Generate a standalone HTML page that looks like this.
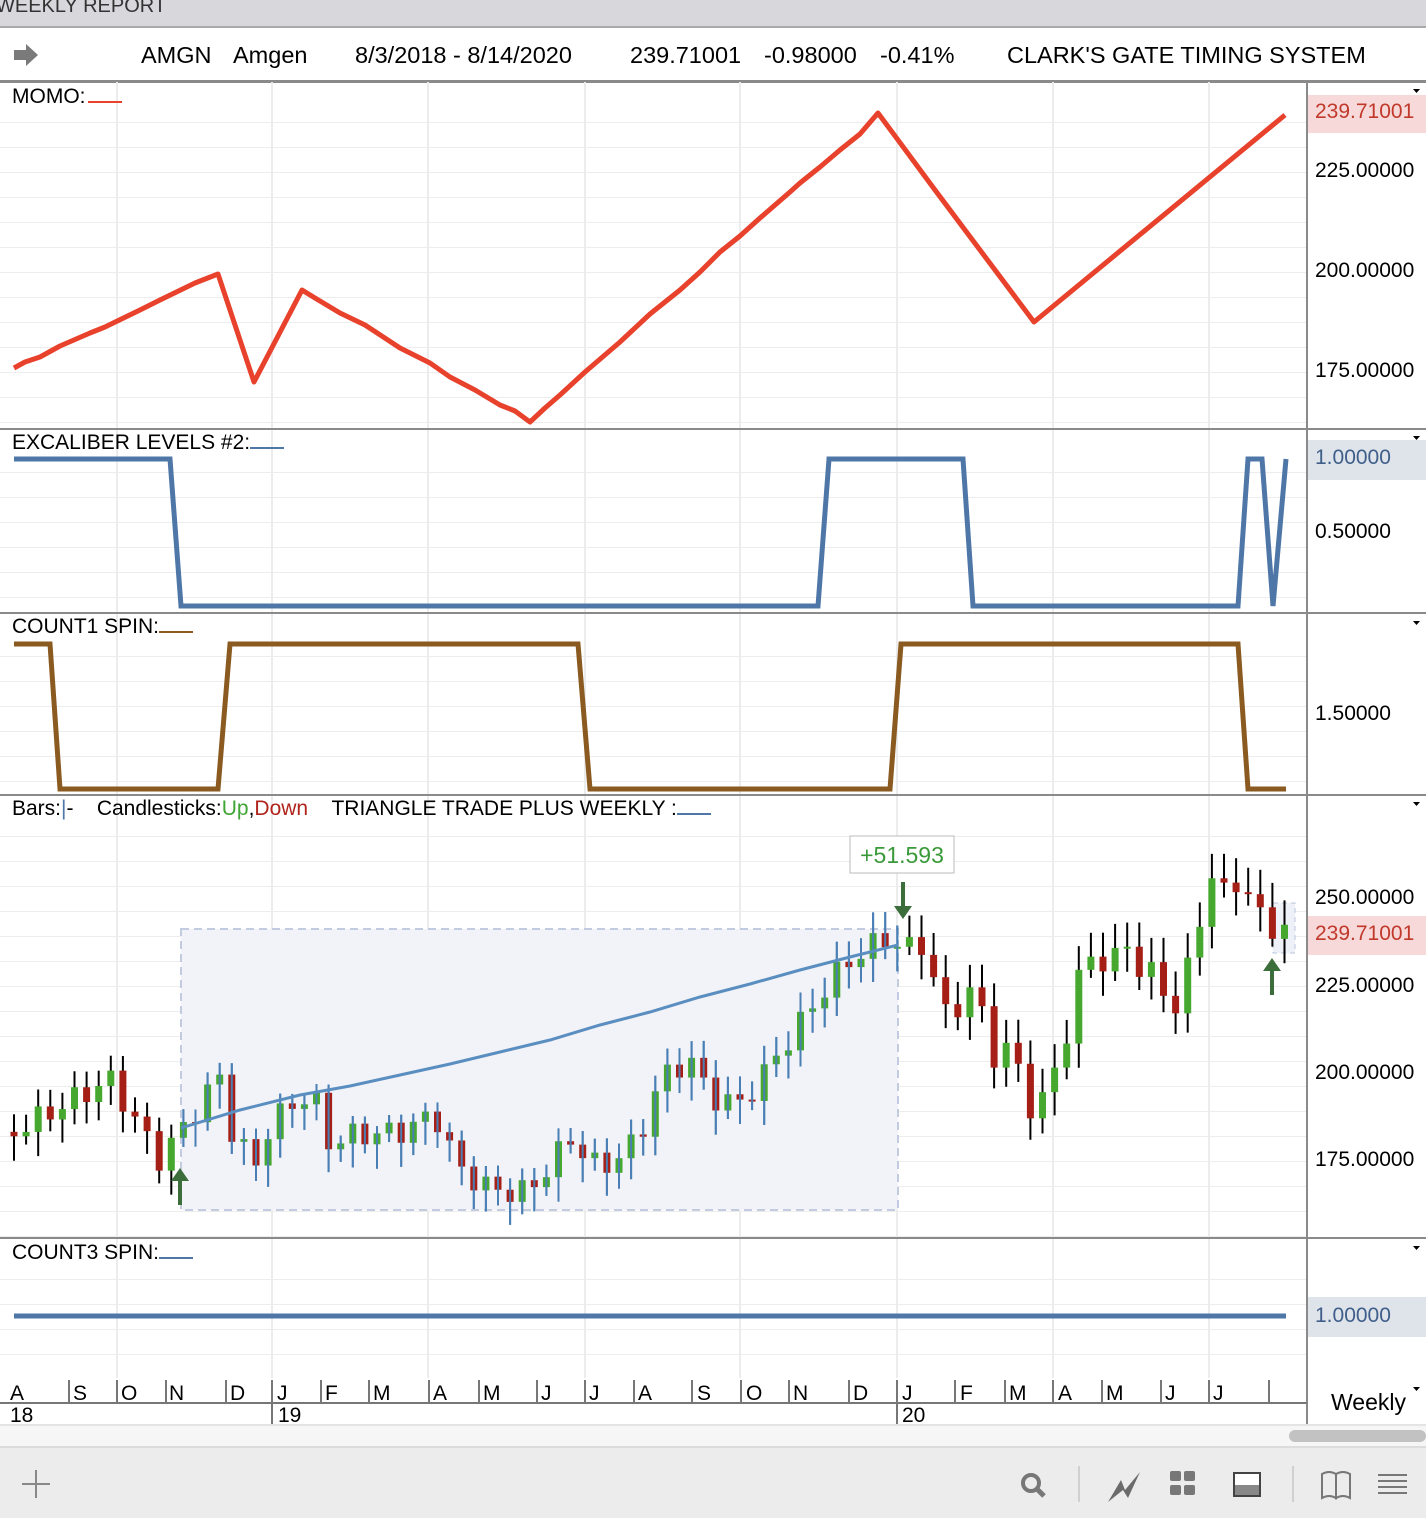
<!DOCTYPE html>
<html><head><meta charset="utf-8"><style>
*{margin:0;padding:0;box-sizing:border-box}
body{width:1426px;height:1518px;overflow:hidden;background:#fff;font-family:"Liberation Sans",Arial,sans-serif;position:relative;color:#000}
.a{position:absolute;white-space:nowrap}
.hdr{font-size:23.5px;top:42px}
.lbl{font-size:21px}
.ax{font-size:21px;left:1315px}
.grid{position:absolute;left:0;width:1307px;background-image:repeating-linear-gradient(to bottom,transparent 0,transparent 24px,#ededed 24px,#ededed 25px)}
.sep{position:absolute;left:0;width:1426px;height:2px;background:#8a8a8a}
</style></head><body>
<div class="a" style="left:0;top:0;width:1426px;height:28px;background:#d8d7dc;border-bottom:2px solid #a9a9a9"></div>
<div class="a" style="left:-4px;top:-5px;font-size:20px;color:#333">WEEKLY REPORT</div>
<svg class="a" style="left:12px;top:42px" width="28" height="26"><path d="M2 8h12V2l12 11-12 11v-6H2z" fill="#7a7a7a"/></svg>
<div class="a hdr" style="left:141px">AMGN</div>
<div class="a hdr" style="left:233px">Amgen</div>
<div class="a hdr" style="left:355px">8/3/2018 - 8/14/2020</div>
<div class="a hdr" style="left:630px">239.71001</div>
<div class="a hdr" style="left:764px">-0.98000</div>
<div class="a hdr" style="left:880px">-0.41%</div>
<div class="a hdr" style="left:1007px">CLARK'S GATE TIMING SYSTEM</div>
<div class="sep" style="top:80px;height:3px"></div>

<div class="grid" style="top:98px;height:330px"></div>
<div class="grid" style="top:448px;height:164px"></div>
<div class="grid" style="top:632px;height:162px"></div>
<div class="grid" style="top:812px;height:425px"></div>
<div class="grid" style="top:1255px;height:122px"></div>
<svg class="a" style="left:0;top:0" width="1307" height="1378">
<g stroke="#ececec" stroke-width="2">
<path d="M117 82V1378M272 82V1378M428 82V1378M585 82V1378M740 82V1378M897 82V1378M1053 82V1378M1209 82V1378"/>
</g>
</svg>

<div class="sep" style="top:428px"></div>
<div class="sep" style="top:612px"></div>
<div class="sep" style="top:794px"></div>
<div class="sep" style="top:1237px"></div>
<div class="a" style="left:1306px;top:82px;width:2px;height:1343px;background:#8a8a8a"></div>

<div class="a lbl" style="left:12px;top:85px">MOMO:<span style="display:inline-block;width:34px;border-bottom:2px solid #e8412c;margin-left:2px"></span></div>
<div class="a lbl" style="left:12px;top:431px">EXCALIBER LEVELS #2:<span style="display:inline-block;width:34px;border-bottom:2px solid #4e77a8"></span></div>
<div class="a lbl" style="left:12px;top:615px">COUNT1 SPIN:<span style="display:inline-block;width:34px;border-bottom:2px solid #8a5a20"></span></div>
<div class="a lbl" style="left:12px;top:797px">Bars:<span style="color:#4e77a8">|</span>-&nbsp;&nbsp;&nbsp;&nbsp;Candlesticks:<span style="color:#3fa535">Up</span>,<span style="color:#b0241b">Down</span>&nbsp;&nbsp;&nbsp;&nbsp;TRIANGLE TRADE PLUS WEEKLY :<span style="display:inline-block;width:34px;border-bottom:2px solid #4e77a8"></span></div>
<div class="a lbl" style="left:12px;top:1241px">COUNT3 SPIN:<span style="display:inline-block;width:34px;border-bottom:2px solid #4e77a8"></span></div>

<div class="a" style="left:1308px;top:95px;width:118px;height:38px;background:#f7d9d9"></div>
<div class="a ax" style="top:100px;color:#c0392b">239.71001</div>
<div class="a ax" style="top:159px">225.00000</div>
<div class="a ax" style="top:259px">200.00000</div>
<div class="a ax" style="top:359px">175.00000</div>
<div class="a" style="left:1308px;top:440px;width:118px;height:40px;background:#dfe3ea"></div>
<div class="a ax" style="top:446px;color:#3f5f8a">1.00000</div>
<div class="a ax" style="top:520px">0.50000</div>
<div class="a ax" style="top:702px">1.50000</div>
<div class="a ax" style="top:886px">250.00000</div>
<div class="a" style="left:1308px;top:916px;width:118px;height:39px;background:#f7d9d9"></div>
<div class="a ax" style="top:922px;color:#c0392b">239.71001</div>
<div class="a ax" style="top:974px">225.00000</div>
<div class="a ax" style="top:1061px">200.00000</div>
<div class="a ax" style="top:1148px">175.00000</div>
<div class="a" style="left:1308px;top:1297px;width:118px;height:40px;background:#dfe3ea"></div>
<div class="a ax" style="top:1304px;color:#3f5f8a">1.00000</div>
<svg class="a" style="left:1410px;top:0" width="16" height="1400"><g fill="#000"><path d="M3 89h7l-3.5 4z"/><path d="M3 436h7l-3.5 4z"/><path d="M3 621h7l-3.5 4z"/><path d="M3 802h7l-3.5 4z"/><path d="M3 1246h7l-3.5 4z"/><path d="M3 1387h7l-3.5 4z"/></g></svg>

<svg class="a" style="left:0;top:0" width="1307" height="1378">
<polyline fill="none" stroke="#e8412c" stroke-width="5" stroke-linejoin="round" points="14,368 25,362 40,357 60,346 90,333 105,327 140,310 160,300 195,283 218,274 254,382 302,290 315,298 340,313 365,325 400,348 430,363 450,377 475,390 500,405 515,411 530,422 545,408 560,395 585,372 620,342 650,314 680,290 700,272 720,252 740,236 760,218 790,192 800,183 820,167 840,150 860,134 878,113 935,190 1034,322 1285,115"/>
<polyline fill="none" stroke="#4e77a8" stroke-width="5" points="14,459 170,459 181,606 818,606 829,459 963,459 973,606 1238,606 1248,459 1262,459 1273,606 1286,459"/>
<polyline fill="none" stroke="#8a5a20" stroke-width="5" points="14,644 50,644 60,789 218,789 230,644 578,644 590,789 890,789 901,644 1238,644 1248,789 1286,789"/>
<line x1="14" y1="1316" x2="1286" y2="1316" stroke="#4e77a8" stroke-width="5"/>
<rect x="181" y="929" width="717" height="281" fill="#f1f3f8" stroke="#c3cbe0" stroke-width="2" stroke-dasharray="8 5"/>
<rect x="1273" y="903" width="22" height="50" fill="#eef1f8" stroke="#b9c6dc" stroke-dasharray="5 4"/>
<g id="candles"></g>
<polyline fill="none" stroke="#5b8ec0" stroke-width="3" points="181,1128 240,1110 300,1095 350,1086 400,1075 450,1064 500,1052 550,1040 600,1025 650,1012 700,997 750,984 800,970 850,957 898,945"/>
<rect x="850" y="836" width="104" height="37" fill="#fff" stroke="#bbb"/>
<text x="902" y="863" font-size="23" fill="#3a9a3a" text-anchor="middle" font-family="Liberation Sans">+51.593</text>
<path d="M901 882v24h-7l9 13 9-13h-7v-24z" fill="#3c6e3c"/>
<path d="M178 1205v-24h-7l9-13 9 13h-7v24z" fill="#3c6e3c"/>
<path d="M1270 995v-24h-7l9-13 9 13h-7v24z" fill="#3c6e3c"/>
</svg>
<script>
(function(){
var k=[[14,183],[110,198],[160,175],[180,183],[220,199],[232,183],[255,173],[270,185],[300,193],[315,192],[330,179],[350,182],[400,183],[435,188],[460,172],[495,166],[530,166],[545,172],[570,181],[600,172],[640,181],[650,192],[665,199],[690,204],[710,193],[740,191],[760,198],[795,212],[830,226],[845,231],[870,236],[890,239],[903,235],[925,237],[938,222],[950,214],[962,222],[975,224],[998,201],[1010,209],[1035,186],[1047,195],[1058,204],[1070,214],[1083,232],[1095,235],[1108,229],[1130,239],[1142,226],[1155,229],[1168,222],[1180,215],[1192,238],[1215,258],[1228,249],[1240,258],[1250,248],[1262,245],[1275,241],[1287,240]];
function at(x){for(var i=1;i<k.length;i++){if(x<=k[i][0]){var a=k[i-1],b=k[i];return a[1]+(b[1]-a[1])*(x-a[0])/(b[0]-a[0]);}}return k[k.length-1][1];}
function Y(p){return 898+(250-p)*3.49;}
var g=document.getElementById('candles'),s='',prev=at(14);
for(var x=14;x<=1287;x+=12.1){var c=at(x)+Math.sin(x*0.7)*3.5,o=prev;prev=c;
var hi=Math.max(o,c)+2+Math.abs(Math.sin(x*1.3))*5,lo=Math.min(o,c)-2-Math.abs(Math.cos(x*0.9))*5;
var inb=x>=181&&x<=898,w=inb?'#4a7fb5':'#000',col=c>=o?'#46a82f':'#a51f17';
var t=Y(Math.max(o,c)),h=Math.max(2,Math.abs(Y(o)-Y(c)));
s+='<line x1="'+x+'" x2="'+x+'" y1="'+Y(hi)+'" y2="'+Y(lo)+'" stroke="'+w+'" stroke-width="2"/>';
s+='<rect x="'+(x-3.5)+'" y="'+t+'" width="7" height="'+h+'" fill="'+col+'"/>';
if(inb)s+='<line x1="'+x+'" x2="'+x+'" y1="'+Y(hi)+'" y2="'+Y(lo)+'" stroke="'+w+'" stroke-width="2"/>';}
g.innerHTML=s;})();
</script>

<svg class="a" style="left:0;top:1378px" width="1307" height="48">
<line x1="0" y1="25" x2="1307" y2="25" stroke="#777" stroke-width="2"/>
<g stroke="#777" stroke-width="2"><path d="M69 2V25M117 2V25M166 2V25M226 2V25M272 2V47M321 2V25M369 2V25M429 2V25M479 2V25M537 2V25M585 2V25M634 2V25M692 2V25M741 2V25M789 2V25M849 2V25M897 2V47M955 2V25M1005 2V25M1053 2V25M1102 2V25M1161 2V25M1209 2V25M1269 2V25"/></g>
<g font-size="21" font-family="Liberation Sans">
<text x="10" y="22">A</text><text x="73" y="22">S</text><text x="121" y="22">O</text><text x="169" y="22">N</text><text x="230" y="22">D</text><text x="277" y="22">J</text><text x="325" y="22">F</text><text x="373" y="22">M</text><text x="433" y="22">A</text><text x="483" y="22">M</text><text x="541" y="22">J</text><text x="589" y="22">J</text><text x="638" y="22">A</text><text x="697" y="22">S</text><text x="746" y="22">O</text><text x="793" y="22">N</text><text x="853" y="22">D</text><text x="902" y="22">J</text><text x="960" y="22">F</text><text x="1009" y="22">M</text><text x="1058" y="22">A</text><text x="1106" y="22">M</text><text x="1165" y="22">J</text><text x="1213" y="22">J</text>
<text x="10" y="44">18</text><text x="278" y="44">19</text><text x="902" y="44">20</text></g>
</svg>
<div class="a" style="left:1331px;top:1389px;font-size:23px">Weekly</div>
<div class="a" style="left:0;top:1424px;width:1426px;height:22px;background:#f6f6f6;border-top:2px solid #e4e4e4"></div>
<div class="a" style="left:1289px;top:1430px;width:137px;height:12px;border-radius:6px;background:#c2c2c2"></div>
<div class="a" style="left:0;top:1446px;width:1426px;height:72px;background:#ececec;border-top:2px solid #dcdcdc"></div>
<svg class="a" style="left:0;top:1446px" width="1426" height="72">
<path d="M36 24v28M22 38h28" stroke="#888" stroke-width="2"/>
<circle cx="1031" cy="37" r="8" fill="none" stroke="#777" stroke-width="4"/><path d="M1037 43l7 7" stroke="#777" stroke-width="5"/>
<path d="M1079 20v36M1293 20v36" stroke="#d0d0d0" stroke-width="2"/>
<path d="M1108 56l13-22 4 10 15-18-12 26-5-8z" fill="#6b6b6b"/>
<g fill="#777"><rect x="1170" y="25" width="11" height="10" rx="2"/><rect x="1184" y="25" width="11" height="10" rx="2"/><rect x="1170" y="39" width="11" height="10" rx="2"/><rect x="1184" y="39" width="11" height="10" rx="2"/></g>
<rect x="1234" y="27" width="26" height="23" fill="#fff" stroke="#444" stroke-width="2"/><rect x="1235" y="39" width="24" height="10" fill="#888"/>
<path d="M1322 28q7-4 14 0v24q-7-4-14 0zM1336 28q7-4 14 0v24q-7-4-14 0z" fill="none" stroke="#777" stroke-width="2"/>
<path d="M1378 29h29M1378 35h29M1378 41h29M1378 47h29" stroke="#777" stroke-width="2"/>
</svg>
</body></html>
